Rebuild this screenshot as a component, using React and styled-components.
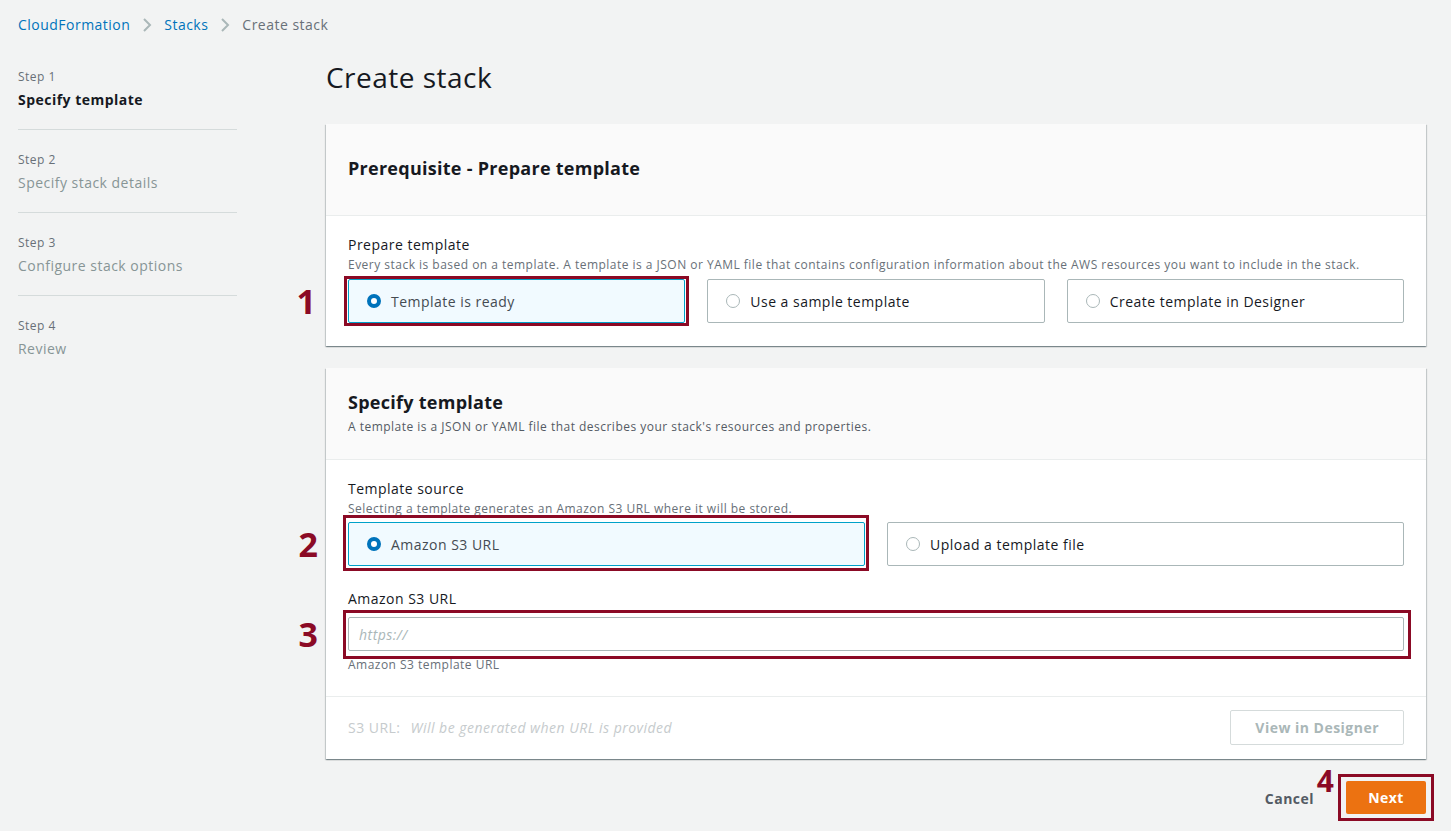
import React from 'react'
import styled, { createGlobalStyle } from 'styled-components'

const GlobalStyle = createGlobalStyle`
  * { box-sizing: border-box; }
  body {
    margin: 0;
    background: #f2f3f3;
    font-family: "Open Sans", "Liberation Sans", sans-serif;
    letter-spacing: 0.03em;
    color: #16191f;
  }
  button, input { letter-spacing: inherit; }
`

const Page = styled.div`
  padding: 15px 25px 20px 18px;
  min-height: 831px;
`

const Crumbs = styled.nav`
  display: flex;
  align-items: center;
  gap: 12px;
  height: 20px;
  font-size: 14px;
  line-height: 20px;
`

const Crumb = styled.a`
  color: ${p => (p.$current ? '#687078' : '#0073bb')};
  text-decoration: none;
`

const Chevron = () => (
  <svg width="10" height="16" viewBox="0 0 10 16" fill="none">
    <path d="M2 2l6 6-6 6" stroke="#aab7b8" strokeWidth="2" />
  </svg>
)

const Layout = styled.div`
  display: grid;
  grid-template-columns: 219px 1fr;
  column-gap: 89px;
  margin-top: 12px;
`

const Steps = styled.ol`
  list-style: none;
  margin: 0;
  padding: 0;
`

const Step = styled.li`
  padding: 22px 0 19px;
  border-bottom: ${p => (p.$last ? 'none' : '1px solid #d5dbdb')};
`

const StepNo = styled.div`
  font-size: 12px;
  line-height: 16px;
  color: #687078;
`

const StepName = styled.div`
  margin-top: 5px;
  font-size: 14px;
  line-height: 20px;
  font-weight: ${p => (p.$active ? 700 : 400)};
  color: ${p => (p.$active ? '#16191f' : '#879596')};
`

const Main = styled.main`
  display: flex;
  flex-direction: column;
`

const Title = styled.h1`
  margin: 12px 0 29px;
  font-size: 28px;
  line-height: 36px;
  font-weight: 400;
`

const Panel = styled.section`
  background: #fff;
  box-shadow: 0 1px 1px 0 rgba(0, 28, 36, 0.3), 1px 1px 1px 0 rgba(0, 28, 36, 0.15),
    -1px 1px 1px 0 rgba(0, 28, 36, 0.15);
  margin-bottom: 22px;
`

const PanelHead = styled.header`
  background: #fafafa;
  border-bottom: 1px solid #eaeded;
  padding: ${p => p.$pad};
`

const PanelTitle = styled.h2`
  margin: 0;
  font-size: 18px;
  line-height: 22px;
  font-weight: 700;
  letter-spacing: 0.015em;
`

const HeadDesc = styled.p`
  margin: 6px 0 0;
  font-size: 12px;
  line-height: 16px;
  color: #545b64;
`

const PanelBody = styled.div`
  padding: 19px 22px 23px;
`

const Label = styled.div`
  font-size: 14px;
  line-height: 20px;
  margin-top: ${p => p.$top || 0}px;
`

const Desc = styled.div`
  font-size: 12px;
  line-height: 16px;
  color: #687078;
  margin-top: 2px;
`

const Tiles = styled.div`
  display: grid;
  grid-template-columns: repeat(${p => p.$cols}, 1fr);
  column-gap: 22px;
  margin-top: ${p => p.$top}px;
`

const Tile = styled.label`
  display: flex;
  align-items: center;
  gap: 10px;
  height: 44px;
  padding: 0 18px;
  border: 1px solid ${p => (p.$on ? '#00a1c9' : '#aab7b8')};
  background: ${p => (p.$on ? '#f1faff' : '#fff')};
  border-radius: 2px;
  font-size: 14px;
  color: ${p => (p.$on ? '#444b52' : '#16191f')};
`

const Dot = styled.span`
  width: 14px;
  height: 14px;
  border-radius: 50%;
  flex: none;
  border: ${p => (p.$on ? '4px solid #0073bb' : '1px solid #aab7b8')};
  background: #fff;
`

const Input = styled.input`
  display: block;
  width: 100%;
  height: 34px;
  border: 1px solid #aab7b8;
  border-radius: 2px;
  padding: 0 10px;
  font: inherit;
  font-size: 14px;
  &::placeholder {
    color: #aab7b8;
    font-style: italic;
  }
`

const Hint = styled.div`
  margin-top: 6px;
  font-size: 12px;
  line-height: 16px;
  color: #687078;
`

const PanelFoot = styled.footer`
  display: flex;
  align-items: center;
  justify-content: space-between;
  border-top: 1px solid #eaeded;
  padding: 13px 22px 14px;
  font-size: 14px;
  color: #c6cbcd;
`

const Generated = styled.em`
  margin-left: 10px;
`

const GhostButton = styled.button`
  height: 35px;
  padding: 0 24px;
  border: 1px solid #d5dbdb;
  border-radius: 2px;
  background: #fff;
  color: #aab7b8;
  font: inherit;
  font-size: 14px;
  font-weight: 700;
`

const Actions = styled.div`
  display: flex;
  justify-content: flex-end;
  align-items: center;
  gap: 32px;
`

const TextButton = styled.button`
  border: none;
  background: none;
  padding: 0;
  font: inherit;
  font-size: 14px;
  font-weight: 700;
  color: #545b64;
  margin-top: 2px;
`

const Primary = styled.button`
  height: 33px;
  width: 80px;
  border: none;
  border-radius: 2px;
  background: #ec7211;
  color: #fff;
  font: inherit;
  font-size: 14px;
  font-weight: 700;
`

// red annotation frame drawn over the screenshot
const Marked = styled.div`
  position: relative;
  &::after {
    content: '';
    position: absolute;
    top: -${p => p.$t}px;
    right: -${p => p.$r}px;
    bottom: -${p => p.$b}px;
    left: -${p => p.$l}px;
    border: 3px solid #8b0a25;
    pointer-events: none;
  }
`

const Num = styled.span`
  position: absolute;
  right: calc(100% + ${p => p.$gap}px);
  top: ${p => p.$top || '50%'};
  transform: translateY(-50%);
  font-family: "Open Sans", "Liberation Sans", sans-serif;
  font-weight: 700;
  font-size: ${p => p.$size || 34}px;
  letter-spacing: 0;
  line-height: 1;
  color: #8b0a25;
`

const steps = ['Specify template', 'Specify stack details', 'Configure stack options', 'Review']

export default function App() {
  return (
    <Page>
      <GlobalStyle />
      <Crumbs>
        <Crumb href="#">CloudFormation</Crumb>
        <Chevron />
        <Crumb href="#">Stacks</Crumb>
        <Chevron />
        <Crumb $current>Create stack</Crumb>
      </Crumbs>

      <Layout>
        <Steps>
          {steps.map((s, i) => (
            <Step key={s} $last={i === steps.length - 1}>
              <StepNo>Step {i + 1}</StepNo>
              <StepName $active={i === 0}>{s}</StepName>
            </Step>
          ))}
        </Steps>

        <Main>
          <Title>Create stack</Title>

          <Panel>
            <PanelHead $pad="33px 22px 36px">
              <PanelTitle>Prerequisite - Prepare template</PanelTitle>
            </PanelHead>
            <PanelBody>
              <Label>Prepare template</Label>
              <Desc>
                Every stack is based on a template. A template is a JSON or YAML file that contains
                configuration information about the AWS resources you want to include in the stack.
              </Desc>
              <Tiles $cols={3} $top={6}>
                <Marked $t={3} $r={4} $b={3} $l={4}>
                  <Num $gap={32}>1</Num>
                  <Tile $on>
                    <Dot $on />
                    Template is ready
                  </Tile>
                </Marked>
                <Tile>
                  <Dot />
                  Use a sample template
                </Tile>
                <Tile>
                  <Dot />
                  Create template in Designer
                </Tile>
              </Tiles>
            </PanelBody>
          </Panel>

          <Panel>
            <PanelHead $pad="23px 22px 24px">
              <PanelTitle>Specify template</PanelTitle>
              <HeadDesc>
                A template is a JSON or YAML file that describes your stack's resources and properties.
              </HeadDesc>
            </PanelHead>
            <PanelBody>
              <Label>Template source</Label>
              <Desc>Selecting a template generates an Amazon S3 URL where it will be stored.</Desc>
              <Tiles $cols={2} $top={5}>
                <Marked $t={7} $r={4} $b={5} $l={5}>
                  <Num $gap={30}>2</Num>
                  <Tile $on>
                    <Dot $on />
                    Amazon S3 URL
                  </Tile>
                </Marked>
                <Tile>
                  <Dot />
                  Upload a template file
                </Tile>
              </Tiles>
              <Label $top={23}>Amazon S3 URL</Label>
              <Marked $t={7} $r={7} $b={8} $l={5} style={{ marginTop: 8 }}>
                <Num $gap={30}>3</Num>
                <Input placeholder="https://" />
              </Marked>
              <Hint>Amazon S3 template URL</Hint>
            </PanelBody>
            <PanelFoot>
              <span>
                S3 URL:<Generated>Will be generated when URL is provided</Generated>
              </span>
              <GhostButton disabled>View in Designer</GhostButton>
            </PanelFoot>
          </Panel>

          <Actions>
            <TextButton>Cancel</TextButton>
            <Marked $t={7} $r={8} $b={7} $l={8}>
              <Num $gap={12} $top="0px" $size={30}>4</Num>
              <Primary>Next</Primary>
            </Marked>
          </Actions>
        </Main>
      </Layout>
    </Page>
  )
}
